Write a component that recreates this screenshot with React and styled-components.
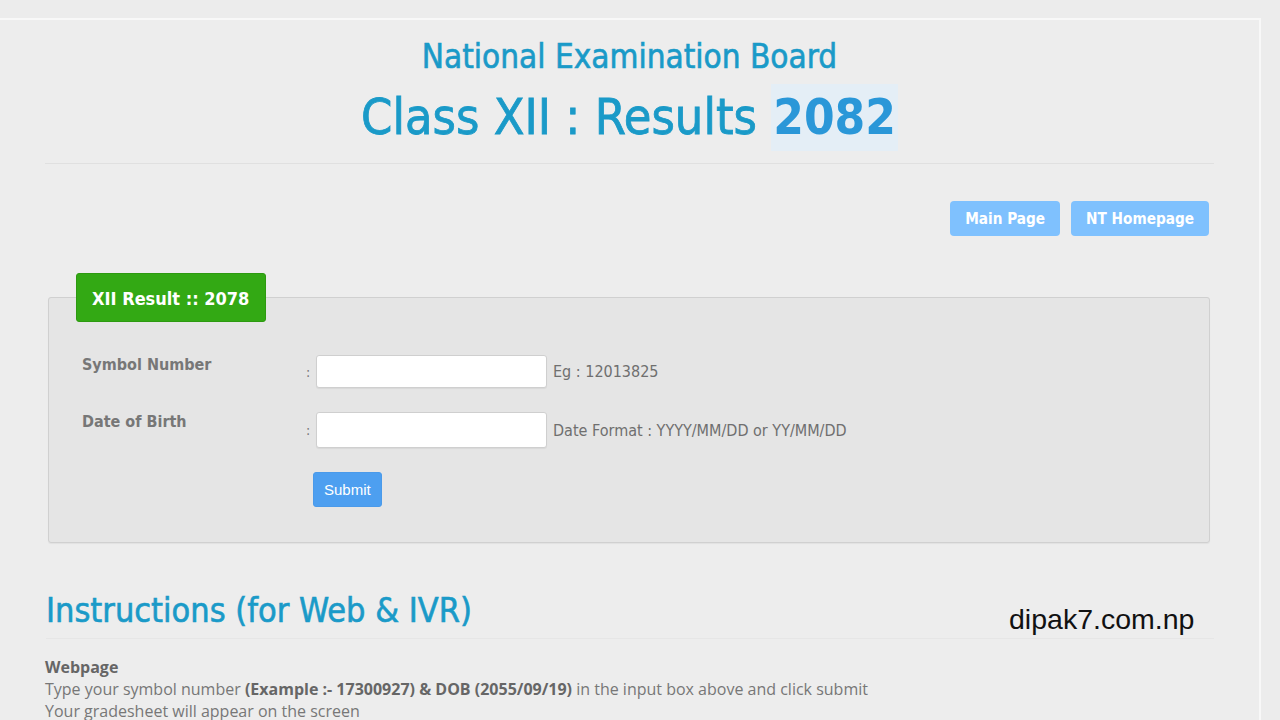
import styled, { createGlobalStyle } from "styled-components";

const GlobalStyle = createGlobalStyle`
  body {
    margin: 0;
    background: #ececec;
    font-family: "DejaVu Sans Condensed", "DejaVu Sans", sans-serif;
  }
`;

const Page = styled.div`
  position: relative;
  width: 1280px;
  height: 720px;
  overflow: hidden;
  padding-top: 18px;
  box-sizing: border-box;
`;

const Panel = styled.div`
  width: 1261px;
  min-height: 720px;
  box-sizing: border-box;
  background: #ededed;
  border-top: 2px solid #f8f8f8;
  border-right: 2px solid #f8f8f8;
  padding: 0 45px;
`;

const Header = styled.header`
  text-align: center;
  padding-top: 17px;
  padding-bottom: 12px;
  border-bottom: 1px solid #e0e0e0;
`;

const Board = styled.h2`
  margin: 0;
  font-size: 33px;
  line-height: 40px;
  font-weight: 500;
  color: #1a9ac8;
  -webkit-text-stroke: 0.6px #1a9ac8;
`;

const ResultTitle = styled.h1`
  margin: 7px 0 0;
  font-size: 50px;
  line-height: 67px;
  font-weight: 500;
  color: #1a9ac8;
  -webkit-text-stroke: 0.8px #1a9ac8;
`;

const Year = styled.span`
  display: inline-block;
  background: #e4eef6;
  color: #2a97d8;
  font-weight: bold;
  font-size: 49px;
  padding: 0 2px;
  -webkit-text-stroke: 0;
`;

const NavRow = styled.nav`
  display: flex;
  justify-content: flex-end;
  gap: 11px;
  margin-top: 37px;
  padding-right: 5px;
`;

const NavButton = styled.a`
  display: flex;
  align-items: center;
  height: 35px;
  padding: 0 15px;
  background: #7fc1fe;
  border-radius: 4px;
  color: #fff;
  font-size: 15.2px;
  font-weight: bold;
  text-decoration: none;
`;

const FormBox = styled.fieldset`
  margin: 37px 4px 0 3px;
  padding: 0 0 35px 27px;
  background: #e5e5e5;
  border: 1px solid #d0d0d0;
  border-radius: 3px;
  box-shadow: 0 1px 1px rgba(0, 0, 0, 0.05);
`;

const Legend = styled.legend`
  padding: 0 16px 0 15px;
  height: 49px;
  line-height: 49px;
  box-sizing: border-box;
  background: #33a914;
  border: 1px solid #2d9a10;
  border-radius: 3px;
  color: #fff;
  font-size: 18px;
  font-weight: bold;
`;

const FormGrid = styled.div`
  display: grid;
  grid-template-columns: 224px 10px 231px auto;
  row-gap: 24px;
  align-items: center;
  padding: 33px 0 0 6px;
`;

const Label = styled.label`
  align-self: start;
  color: #777;
  font-size: 16px;
  font-weight: bold;
`;

const Colon = styled.span`
  color: #777;
  font-size: 14px;
`;

const Input = styled.input`
  height: ${(p) => p.$h}px;
  box-sizing: border-box;
  background: #fff;
  border: 1px solid #cfcfcf;
  border-radius: 3px;
  box-shadow: 0 1px 1px rgba(0, 0, 0, 0.06);
`;

const Hint = styled.span`
  padding-left: 6px;
  color: #6f6f6f;
  font-size: 16px;
`;

const Submit = styled.button`
  grid-column: 3;
  justify-self: start;
  margin-left: -3px;
  height: 35px;
  padding: 0 10px;
  background: #4d9ff0;
  border: 1px solid #4a9aea;
  border-radius: 3px;
  color: #fff;
  font-family: "Liberation Sans", Arial, sans-serif;
  font-size: 15px;
`;

const Instructions = styled.section`
  margin-top: 44px;
`;

const SectionTitle = styled.h3`
  margin: 0 0 0 1px;
  padding-bottom: 5px;
  border-bottom: 1px solid #e6e6e6;
  font-size: 34px;
  line-height: 46px;
  font-weight: 500;
  color: #1a9ac8;
  -webkit-text-stroke: 0.6px #1a9ac8;
`;

const Body = styled.div`
  margin-top: 17px;
  font-family: "Open Sans", Lato, sans-serif;
  font-size: 16px;
  line-height: 22px;
  color: #777;
  b {
    color: #666;
  }
`;

const Watermark = styled.div`
  position: absolute;
  left: 1009px;
  top: 603px;
  font-family: "Liberation Sans", Arial, sans-serif;
  font-size: 28.5px;
  color: #111;
`;

export default function App() {
  return (
    <Page>
      <GlobalStyle />
      <Panel>
        <Header>
          <Board>National Examination Board</Board>
          <ResultTitle>
            Class XII : Results <Year>2082</Year>
          </ResultTitle>
        </Header>

        <NavRow>
          <NavButton href="#">Main Page</NavButton>
          <NavButton href="#">NT Homepage</NavButton>
        </NavRow>

        <FormBox>
          <Legend>XII Result :: 2078</Legend>
          <FormGrid>
            <Label>Symbol Number</Label>
            <Colon>:</Colon>
            <Input $h={33} />
            <Hint>Eg : 12013825</Hint>

            <Label>Date of Birth</Label>
            <Colon>:</Colon>
            <Input $h={36} />
            <Hint>Date Format : YYYY/MM/DD or YY/MM/DD</Hint>

            <Submit>Submit</Submit>
          </FormGrid>
        </FormBox>

        <Instructions>
          <SectionTitle>Instructions (for Web &amp; IVR)</SectionTitle>
          <Body>
            <b>Webpage</b>
            <br />
            Type your symbol number <b>(Example :- 17300927) &amp; DOB (2055/09/19)</b> in the input box above and click submit
            <br />
            Your gradesheet will appear on the screen
          </Body>
        </Instructions>
      </Panel>
      <Watermark>dipak7.com.np</Watermark>
    </Page>
  );
}
